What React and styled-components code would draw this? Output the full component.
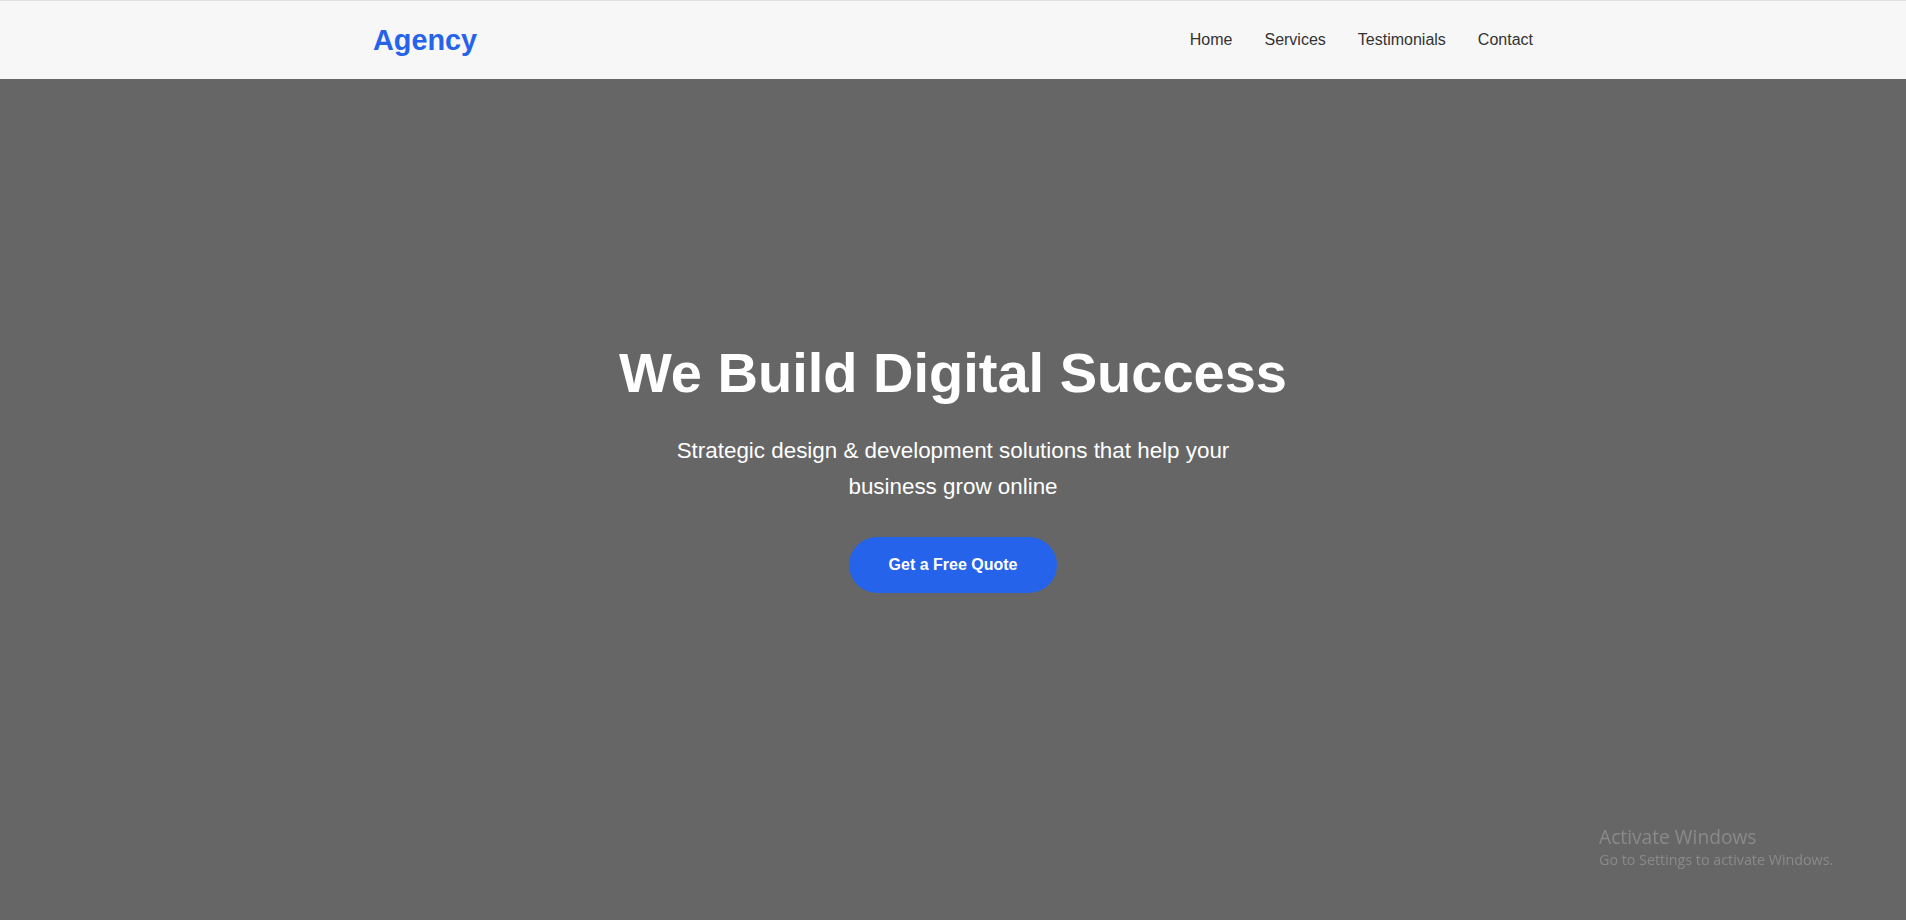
import React from "react";
import styled, { createGlobalStyle } from "styled-components";

const GlobalStyle = createGlobalStyle`
  * {
    box-sizing: border-box;
  }

  body {
    margin: 0;
    padding: 0;
    font-family: "Liberation Sans", Arial, sans-serif;
    background-color: #666;
  }
`;

const Header = styled.header`
  background-color: #f7f7f7;
  border-top: 1px solid #e2e2e2;
  height: 79px;
  display: flex;
  align-items: center;
`;

const Container = styled.div`
  width: 100%;
  max-width: 1200px;
  margin: 0 auto;
  padding: 0 20px;
  display: flex;
  align-items: center;
  justify-content: space-between;
`;

const Logo = styled.a`
  font-size: 1.8rem;
  font-weight: 700;
  color: #2563eb;
  text-decoration: none;
`;

const Nav = styled.nav`
  display: flex;
  gap: 2rem;
`;

const NavLink = styled.a`
  font-size: 16px;
  color: #333;
  text-decoration: none;
`;

const Hero = styled.section`
  height: 841px;
  background-color: #666;
  display: flex;
  flex-direction: column;
  align-items: center;
  justify-content: center;
  padding-bottom: 67px;
  text-align: center;
  color: #fff;
`;

const Title = styled.h1`
  font-size: 3.5rem;
  font-weight: 700;
  margin: 0 0 28px 0;
`;

const Subtitle = styled.p`
  font-size: 1.4rem;
  line-height: 36px;
  max-width: 600px;
  margin: 0 0 32px 0;
`;

const QuoteButton = styled.a`
  display: inline-block;
  background-color: #2563eb;
  color: #fff;
  font-size: 16px;
  font-weight: 700;
  padding: 19px 40px;
  border-radius: 50px;
  text-decoration: none;
`;

const Watermark = styled.div`
  position: fixed;
  left: 1599px;
  top: 825px;
  font-family: "Open Sans", "Noto Sans", sans-serif;
  color: #8a8a8a;
  line-height: 1.2;
`;

const WatermarkTitle = styled.div`
  font-size: 19.2px;
`;

const WatermarkText = styled.div`
  font-size: 14.3px;
  margin-top: 3px;
`;

const links = ["Home", "Services", "Testimonials", "Contact"];

export default function App() {
  return (
    <>
      <GlobalStyle />
      <Header>
        <Container>
          <Logo href="#">Agency</Logo>
          <Nav>
            {links.map((link) => (
              <NavLink key={link} href="#">
                {link}
              </NavLink>
            ))}
          </Nav>
        </Container>
      </Header>
      <Hero>
        <Title>We Build Digital Success</Title>
        <Subtitle>
          Strategic design &amp; development solutions that help your business
          grow online
        </Subtitle>
        <QuoteButton href="#">Get a Free Quote</QuoteButton>
      </Hero>
      <Watermark>
        <WatermarkTitle>Activate Windows</WatermarkTitle>
        <WatermarkText>Go to Settings to activate Windows.</WatermarkText>
      </Watermark>
    </>
  );
}
